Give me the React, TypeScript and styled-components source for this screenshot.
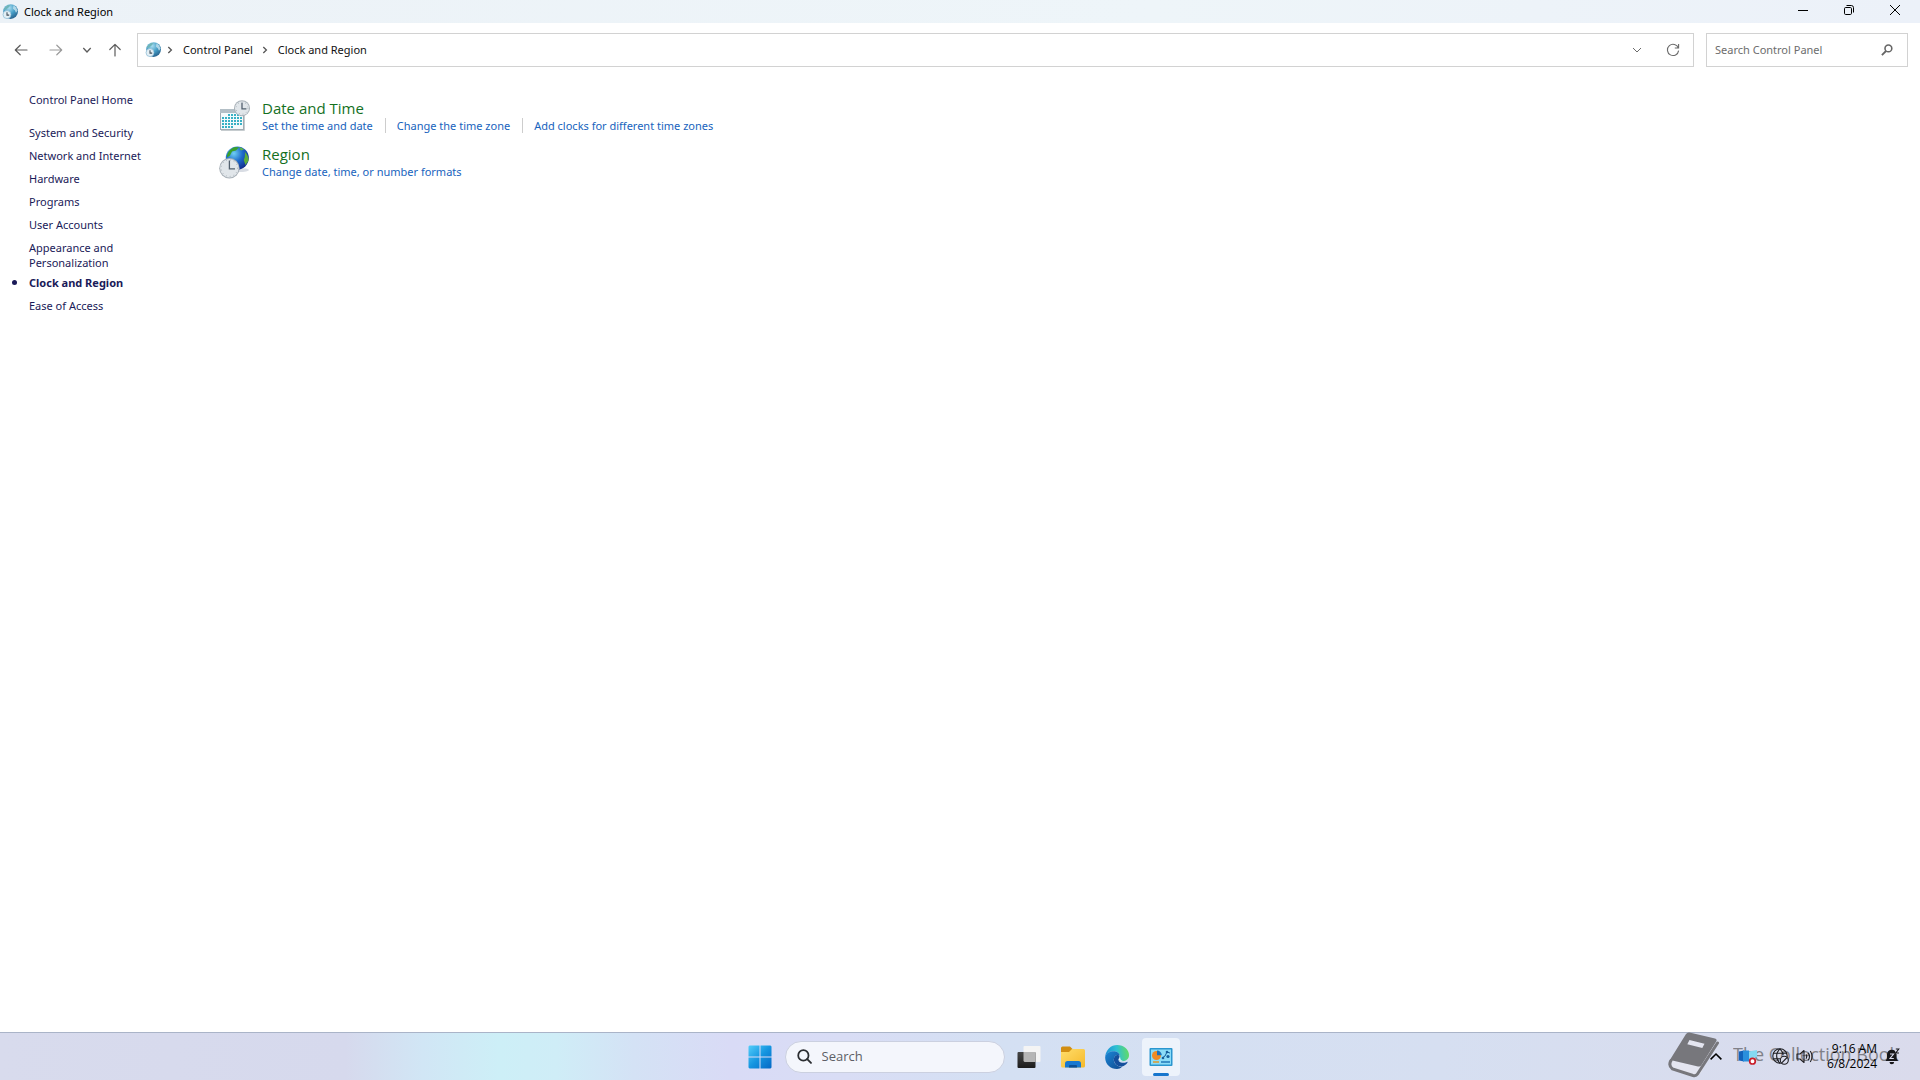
import React from "react";
import styled, { createGlobalStyle } from "styled-components";

const GlobalStyle = createGlobalStyle`
  * { box-sizing: border-box; }
  body {
    margin: 0;
    background: #fff;
    font-family: "Noto Sans", "Open Sans", sans-serif;
    font-size: 11px;
    line-height: 15px;
    color: #000;
  }
  button, input { font: inherit; color: inherit; }
  svg { display: block; flex: none; }
`;

const Screen = styled.div`
  min-height: 100vh;
  display: flex;
  flex-direction: column;
`;

const TitleBar = styled.header`
  height: 23px;
  display: flex;
  justify-content: space-between;
  background: linear-gradient(90deg, #ecf2f7, #eef5f9 60%, #ecf1f9);
`;

const TitleLabel = styled.h1`
  margin: 0;
  padding-left: 2px;
  display: flex;
  align-items: center;
  gap: 6px;
  font-size: 11px;
  font-weight: 400;
`;

const PlainButton = styled.button`
  border: 0;
  padding: 0;
  background: transparent;
  display: flex;
  align-items: center;
  justify-content: center;
`;

const CaptionButtons = styled.div`
  display: flex;
  padding-right: 2px;
`;

const CaptionButton = styled(PlainButton)`
  width: 46px;
  height: 20px;
`;

const Toolbar = styled.nav`
  display: flex;
  align-items: center;
  padding: 10px 12px 10px 5px;
`;

const NavButtons = styled.div`
  display: flex;
  align-items: center;
  margin-right: 6px;
`;

const NavButton = styled(PlainButton)<{ $width: number; $dim?: boolean }>`
  width: ${(p) => p.$width}px;
  height: 32px;
  color: ${(p) => (p.$dim ? "#9b9b9b" : "#5c5c5c")};
`;

const AddressBar = styled.div`
  flex: 1;
  height: 34px;
  display: flex;
  align-items: center;
  border: 1px solid #d2d2d2;
  padding: 0 2px 0 7px;
`;

const Crumbs = styled.ol`
  flex: 1;
  list-style: none;
  margin: 0;
  padding: 0 0 1px 6px;
  display: flex;
  align-items: center;
`;

const Crumb = styled.li`
  display: flex;
  align-items: center;
  gap: 10px;
  margin-right: 9px;
  a { color: #111; text-decoration: none; }
`;

const AddressButton = styled(PlainButton)`
  width: 36px;
  height: 30px;
  color: #6b6b6b;
`;

const SearchBox = styled.label`
  width: 202px;
  height: 34px;
  margin-left: 12px;
  display: flex;
  align-items: center;
  border: 1px solid #d2d2d2;
  padding: 0 14px 0 8px;
`;

const SearchInput = styled.input`
  flex: 1;
  min-width: 0;
  border: 0;
  padding: 0 0 1px;
  background: transparent;
  outline: none;
  &::placeholder { color: #6d6d6d; opacity: 1; }
`;

const Content = styled.div`
  flex: 1;
  display: flex;
`;

const Sidebar = styled.nav`
  width: 219px;
  padding: 15px 0 0 29px;
  color: #1a1a58;
  a { color: inherit; text-decoration: none; }
`;

const HomeLink = styled.a`
  display: block;
  margin-bottom: 18px;
`;

const CategoryList = styled.ul`
  width: 130px;
  list-style: none;
  margin: 0;
  padding: 0;
  display: grid;
  gap: 5px;
`;

const CategoryItem = styled.li<{ $current?: boolean }>`
  position: relative;
  min-height: 18px;
  font-weight: ${(p) => (p.$current ? 700 : 400)};
  &::before {
    content: "";
    display: ${(p) => (p.$current ? "block" : "none")};
    position: absolute;
    left: -17px;
    top: 5px;
    width: 5px;
    height: 5px;
    border-radius: 50%;
    background: #1a1a58;
  }
`;

const Applets = styled.main`
  flex: 1;
  padding-top: 20px;
`;

const Applet = styled.section`
  height: 46px;
  display: flex;
  gap: 11px;
`;

const AppletIcon = styled.div`
  padding-top: 3px;
`;

const AppletTitle = styled.h2`
  margin: 0;
  padding-top: 1px;
  font-family: "Open Sans", "Noto Sans", sans-serif;
  font-size: 15px;
  line-height: 20px;
  font-weight: 400;
  a { color: #14701e; text-decoration: none; }
`;

const TaskLinks = styled.ul`
  list-style: none;
  margin: 0;
  padding: 0;
  display: flex;
  li + li {
    margin-left: 12px;
    padding-left: 11px;
    border-left: 1px solid #cdcdcd;
  }
  a { color: #1763bd; text-decoration: none; }
`;

const Taskbar = styled.footer`
  position: relative;
  height: 48px;
  display: grid;
  grid-template-columns: 1fr auto 1fr;
  align-items: center;
  border-top: 1px solid #aab4c8;
  font-family: "Open Sans", "Noto Sans", sans-serif;
  font-size: 12px;
  background: linear-gradient(
    90deg,
    #d8dbed 0%,
    #d6d9ed 18%,
    #d1e6f5 22%,
    #cdeff7 26%,
    #cfedf7 29%,
    #d4e2f5 33%,
    #d9dbf6 38%,
    #d9ddf5 44%,
    #d4e0f3 52%,
    #d6dff1 75%,
    #dadbec 100%
  );
`;

const Pinned = styled.div`
  grid-column: 2;
  display: flex;
  align-items: center;
`;

const TaskButton = styled(PlainButton)`
  width: 44px;
  height: 46px;
`;

const ActiveTaskButton = styled(PlainButton)`
  position: relative;
  width: 38px;
  height: 38px;
  margin: 0 3px;
  border-radius: 4px;
  background: #edf3fb;
  &::after {
    content: "";
    position: absolute;
    bottom: 0;
    width: 16px;
    height: 3px;
    border-radius: 2px;
    background: #1675cd;
  }
`;

const TaskSearch = styled.label`
  width: 220px;
  height: 32px;
  margin: 0 2px 0 3px;
  padding: 0 12px 0 11px;
  display: flex;
  align-items: center;
  gap: 10px;
  border: 1px solid #cbd0e0;
  border-radius: 16px;
  background: #f4f6fc;
  font-size: 13px;
  ${SearchInput}::placeholder { color: #5d5f66; }
`;

const Tray = styled.div`
  position: relative;
  z-index: 1;
  grid-column: 3;
  justify-self: end;
  display: flex;
  align-items: center;
  padding-right: 17px;
`;

const TrayButton = styled(PlainButton)<{ $width: number }>`
  width: ${(p) => p.$width}px;
  height: 40px;
`;

const Clock = styled.button`
  border: 0;
  padding: 0 0 2px;
  width: 61px;
  margin-right: 4px;
  background: transparent;
  text-align: right;
  white-space: nowrap;
`;

const Watermark = styled.div`
  position: absolute;
  right: 21px;
  top: -1px;
  display: flex;
  align-items: flex-start;
  gap: 14px;
  color: #77777c;
  font-size: 18px;
  line-height: 44px;
  pointer-events: none;
  white-space: nowrap;
  span { opacity: 0.9; }
`;

const RegionSmallIcon = () => (
  <svg width="16" height="16" viewBox="0 0 16 16" aria-hidden="true">
    <defs>
      <radialGradient id="smallGlobe" cx="0.4" cy="0.25" r="0.8">
        <stop offset="0" stopColor="#a9def0" />
        <stop offset="0.5" stopColor="#459dc6" />
        <stop offset="1" stopColor="#255b86" />
      </radialGradient>
    </defs>
    <circle cx="8.6" cy="7.6" r="7.4" fill="url(#smallGlobe)" />
    <path d="M2.5 4 6 1l2.5.2L6.5 3.5 4 5.5 1.8 6z" fill="#6fb5b8" />
    <path d="M11.5 1.2l2.5 2 1.6 3.5-1.6 2-1.2-2.5-1.8-1.5z" fill="#c9e5ef" opacity="0.8" />
    <circle cx="5" cy="10.6" r="4" fill="#e3eff5" stroke="#86b8d2" strokeWidth="0.7" />
    <path d="M5 8.3v2.8h2.2" fill="none" stroke="#44505c" strokeWidth="1.1" />
  </svg>
);

const Arrow = ({ up, right }: { up?: boolean; right?: boolean }) => (
  <svg
    width="14"
    height="14"
    viewBox="0 0 14 14"
    fill="none"
    stroke="currentColor"
    strokeWidth="1.2"
    strokeLinecap="round"
    strokeLinejoin="round"
    aria-hidden="true"
  >
    {up ? (
      <path d="M7 13V1.5M1.8 6.5 7 1.3l5.2 5.2" />
    ) : right ? (
      <path d="M1 7h11.5M7.8 2.2 12.7 7l-4.9 4.8" />
    ) : (
      <path d="M13 7H1.5M6.2 2.2 1.3 7l4.9 4.8" />
    )}
  </svg>
);

const Chevron = ({ d, w = 1.1, size = 10 }: { d: string; w?: number; size?: number }) => (
  <svg width={size} height={size} viewBox="0 0 10 10" fill="none" stroke="currentColor" strokeWidth={w} aria-hidden="true">
    <path d={d} />
  </svg>
);

const CrumbChevron = () => (
  <svg width="6" height="8" viewBox="0 0 6 8" fill="none" stroke="#555" strokeWidth="1.3" aria-hidden="true">
    <path d="M1.3 1 4.4 4 1.3 7" />
  </svg>
);

const ClockFace = ({ cx, cy, r }: { cx: number; cy: number; r: number }) => (
  <g>
    <circle cx={cx} cy={cy} r={r} fill="#a9b1b8" />
    <circle cx={cx} cy={cy} r={r - 1} fill="#e1e6ea" />
    <circle cx={cx} cy={cy} r={r - 2} fill="none" stroke="#9ca6ae" strokeWidth="1" strokeDasharray="0.7 3.2" />
    <path d={`M${cx} ${cy - r + 2.6}V${cy + 0.6}H${cx + r * 0.55}`} fill="none" stroke="#53616f" strokeWidth="1.3" />
  </g>
);

const DateTimeIcon = () => (
  <svg width="32" height="32" viewBox="0 0 32 32" aria-hidden="true">
    <rect x="1.5" y="9.5" width="23" height="20" fill="#f4fafb" stroke="#a2acb3" />
    <path d="M1 9h24v4H1z" fill="#b3bfc6" />
    <path d="M2 30.5h23.5V13" fill="none" stroke="#c6cccf" />
    <g fill="#38b1c5">
      {[14, 17, 20, 23, 26].flatMap((y, row) =>
        [3, 6, 9, 12, 15, 18, 21].map((x, col) =>
          (row === 0 && col < 2) || (row === 4 && col > 3) ? null : (
            <rect key={`${x}-${y}`} x={x} y={y} width="2" height="2" />
          ),
        ),
      )}
    </g>
    <ClockFace cx={23} cy={8.2} r={8} />
  </svg>
);

const RegionIcon = () => (
  <svg width="32" height="34" viewBox="0 0 32 34" aria-hidden="true">
    <defs>
      <radialGradient id="regionGlobe" cx="0.35" cy="0.3" r="0.75">
        <stop offset="0" stopColor="#6fd0f4" />
        <stop offset="0.5" stopColor="#1e6bcb" />
        <stop offset="1" stopColor="#122d8b" />
      </radialGradient>
    </defs>
    <ellipse cx="20" cy="24" rx="10" ry="2" fill="#d9dde4" />
    <circle cx="18.3" cy="12" r="11.5" fill="url(#regionGlobe)" />
    <path d="M8 9q2-6 8-8l4 .3-3 3.2-4 1-2 4-3 2z" fill="#3aa02c" />
    <path d="M20 1q3 .5 5 2.5l-3 1z" fill="#64b93f" />
    <path d="M26 6q4 4 3.4 9l-3 4-1.6-5 1-3z" fill="#5daf3b" />
    <ClockFace cx={10.4} cy={22.2} r={10.2} />
  </svg>
);

const Magnifier = ({ size, w }: { size: number; w: number }) => (
  <svg width={size} height={size} viewBox="0 0 16 16" fill="none" stroke="#2b2d31" strokeWidth={w} strokeLinecap="round" aria-hidden="true">
    <circle cx="6.8" cy="6.8" r="5.5" />
    <path d="m10.9 10.9 4 4" />
  </svg>
);

const categories = [
  "System and Security",
  "Network and Internet",
  "Hardware",
  "Programs",
  "User Accounts",
  "Appearance and Personalization",
  "Clock and Region",
  "Ease of Access",
];

const applets = [
  {
    title: "Date and Time",
    icon: <DateTimeIcon />,
    tasks: ["Set the time and date", "Change the time zone", "Add clocks for different time zones"],
  },
  { title: "Region", icon: <RegionIcon />, tasks: ["Change date, time, or number formats"] },
];

export default function App() {
  return (
    <Screen>
      <GlobalStyle />
      <TitleBar>
        <TitleLabel>
          <RegionSmallIcon />
          Clock and Region
        </TitleLabel>
        <CaptionButtons>
          <CaptionButton aria-label="Minimize">
            <svg width="10" height="10" viewBox="0 0 10 10" stroke="#000"><path d="M0 5.5h10" /></svg>
          </CaptionButton>
          <CaptionButton aria-label="Restore">
            <svg width="10" height="10" viewBox="0 0 10 10" fill="none" stroke="#000">
              <rect x="0.5" y="2.5" width="7" height="7" rx="1.2" />
              <path d="M2.5.5h4.8a2.2 2.2 0 0 1 2.2 2.2v4.8" />
            </svg>
          </CaptionButton>
          <CaptionButton aria-label="Close">
            <svg width="10" height="10" viewBox="0 0 10 10" stroke="#000"><path d="m0 0 10 10M10 0 0 10" /></svg>
          </CaptionButton>
        </CaptionButtons>
      </TitleBar>

      <Toolbar aria-label="Navigation">
        <NavButtons>
          <NavButton $width={32} aria-label="Back"><Arrow /></NavButton>
          <NavButton $width={38} $dim aria-label="Forward"><Arrow right /></NavButton>
          <NavButton $width={24} aria-label="Recent locations"><Chevron d="M1.3 3 5 7l3.7-4" w={1.3} /></NavButton>
          <NavButton $width={32} aria-label="Up"><Arrow up /></NavButton>
        </NavButtons>
        <AddressBar>
          <RegionSmallIcon />
          <Crumbs>
            <Crumb><CrumbChevron /><a href="#control-panel">Control Panel</a></Crumb>
            <Crumb><CrumbChevron /><a href="#clock-and-region">Clock and Region</a></Crumb>
          </Crumbs>
          <AddressButton aria-label="Previous locations"><Chevron d="M1 3 5 7l4-4" w={1} /></AddressButton>
          <AddressButton aria-label="Refresh">
            <svg width="14" height="14" viewBox="0 0 14 14" fill="none" stroke="currentColor" strokeWidth="1.1">
              <path d="M12.3 5A5.6 5.6 0 1 0 12.6 7.6M12.6 1v4H8.8" />
            </svg>
          </AddressButton>
        </AddressBar>
        <SearchBox>
          <SearchInput type="text" placeholder="Search Control Panel" aria-label="Search Control Panel" />
          <svg width="12" height="12" viewBox="0 0 12 12" fill="none" stroke="#666" aria-hidden="true">
            <circle cx="7.4" cy="4.4" r="3.4" strokeWidth="1.6" />
            <path d="M5 7 .9 11.1" strokeWidth="1.8" />
          </svg>
        </SearchBox>
      </Toolbar>

      <Content>
        <Sidebar aria-label="Control Panel categories">
          <HomeLink href="#home">Control Panel Home</HomeLink>
          <CategoryList>
            {categories.map((name) => (
              <CategoryItem key={name} $current={name === "Clock and Region"}>
                <a href="#category">{name}</a>
              </CategoryItem>
            ))}
          </CategoryList>
        </Sidebar>
        <Applets>
          {applets.map(({ title, icon, tasks }) => (
            <Applet key={title}>
              <AppletIcon>{icon}</AppletIcon>
              <div>
                <AppletTitle><a href="#applet">{title}</a></AppletTitle>
                <TaskLinks>
                  {tasks.map((task) => (
                    <li key={task}><a href="#task">{task}</a></li>
                  ))}
                </TaskLinks>
              </div>
            </Applet>
          ))}
        </Applets>
      </Content>

      <Taskbar>
        <Pinned>
          <TaskButton aria-label="Start">
            <svg width="24" height="24" viewBox="0 0 24 24">
              <defs>
                <linearGradient id="start" x1="0" y1="0" x2="24" y2="24" gradientUnits="userSpaceOnUse">
                  <stop offset="0" stopColor="#55d0fb" />
                  <stop offset="0.5" stopColor="#1595e0" />
                  <stop offset="1" stopColor="#0466c4" />
                </linearGradient>
              </defs>
              <path d="M1.5.5H11.5V11.5H.5V1.5zM12.5.5h10l1 1v10h-11zM.5 12.5h11v11h-10l-1-1zM12.5 12.5h11v10l-1 1h-10z" fill="url(#start)" />
            </svg>
          </TaskButton>
          <TaskSearch>
            <Magnifier size={15} w={1.9} />
            <SearchInput type="text" placeholder="Search" aria-label="Search" />
          </TaskSearch>
          <TaskButton aria-label="Task view">
            <svg width="24" height="24" viewBox="0 0 24 24">
              <defs>
                <linearGradient id="front" x1="0" y1="0" x2="0" y2="1">
                  <stop offset="0" stopColor="#454545" /><stop offset="1" stopColor="#1c1c1c" />
                </linearGradient>
              </defs>
              <rect x="6.5" y="1" width="17" height="16" rx="1" fill="#f4f4f4" />
              <rect x="0.5" y="7" width="18" height="16" rx="1" fill="url(#front)" />
              <path d="M6.5 7h12v10h-11l-1-1z" fill="#b5b5b5" />
            </svg>
          </TaskButton>
          <TaskButton aria-label="File Explorer">
            <svg width="24" height="24" viewBox="0 0 24 24">
              <defs>
                <linearGradient id="folder" x1="0" y1="0" x2="1" y2="1">
                  <stop offset="0" stopColor="#ffdd6a" /><stop offset="1" stopColor="#f5b92b" />
                </linearGradient>
              </defs>
              <path d="M0 3q0-1.5 1.5-1.5H9l2.5 2.5v4H0z" fill="#d28e12" />
              <path d="M0 7h8l3-3h11.5Q24 4 24 5.5V21q0 1.500-1.500 1.500h-21Q0 22.500 0 21z" fill="url(#folder)" />
              <path d="M4 22.500v-4Q4 16 6.500 16h11Q20 16 20 18.500v4z" fill="#1778d0" />
              <path d="M8 22.500v-1.500q0-1 1-1h6q1 0 1 1v1.500z" fill="#0b4f95" />
            </svg>
          </TaskButton>
          <TaskButton aria-label="Microsoft Edge">
            <svg width="24" height="24" viewBox="0 0 24 24">
              <defs>
                <linearGradient id="edgeTop" x1="0" y1="0.5" x2="1" y2="0.4">
                  <stop offset="0" stopColor="#1c8fd6" /><stop offset="0.5" stopColor="#2fc0d3" /><stop offset="1" stopColor="#63dc62" />
                </linearGradient>
                <linearGradient id="edgeLow" x1="0" y1="0" x2="1" y2="1">
                  <stop offset="0" stopColor="#1a86d6" /><stop offset="1" stopColor="#114a8f" />
                </linearGradient>
              </defs>
              <path d="M.3 11.5C.8 4.800 6 0 12.200 0 19 0 24 4.700 24 10c0 4-3 6.200-6.200 6.200-3 0-4.200-1.200-4.200-2 0-.7 1.200-1.300 1.200-3.300C14.800 8.200 12 6.200 8.500 6.200 4.500 6.200 1.500 8.300.3 11.500z" fill="url(#edgeTop)" />
              <path d="M.2 12C.6 8.400 4.300 6.200 8.400 6.200c3.700 0 6.200 2 6.400 4.500C13.500 9.300 9 9.800 8.800 14.300c-.2 4.500 4 8.200 8.500 7.200C15.500 23.300 13.800 24 12 24 5.300 24-.2 18.700.2 12z" fill="url(#edgeLow)" />
              <path d="M10.300 10.900c-1 .8-1.500 2-1.500 3.400 0 4.300 3.800 7.700 8.200 7.200 2.200-.4 4.300-2 5.500-4 .3-.6-.1-.9-.6-.6-4.400 2.100-9.200.3-8.300-3 .3-.6 1-1 1.100-2.500-.8-1.500-3-1.700-4.400-.5z" fill="#144f9c" />
              <path d="M13.600 14.200c.3-.6 1.200-1.300 1.200-3.300.8 2-.2 4.300 3.800 5.200-2.800.3-5-.7-5-1.900z" fill="#e8f3fb" />
            </svg>
          </TaskButton>
          <ActiveTaskButton aria-label="Control Panel">
            <svg width="24" height="20" viewBox="0 0 24 20">
              <rect x="0.5" y="1" width="23" height="18" rx="1" fill="#2a96cf" />
              <rect x="2" y="2.5" width="20" height="15" fill="#8bdcf8" />
              <circle cx="7.5" cy="8.5" r="4.5" fill="#f08b24" />
              <path d="M8 3.5a4.800 4.800 0 0 1 4.800 4.800H8z" fill="#1b71bb" />
              <path d="m13 11 3-2 2-4 3 1" stroke="#175f9d" fill="none" />
              <g fill="#175f9d"><circle cx="14" cy="11" r="1.3" /><circle cx="18" cy="5" r="1.3" /><circle cx="19" cy="9.5" r="1.6" /></g>
              <path d="M4 15h6" stroke="#dd992b" strokeWidth="1.5" />
              <path d="M12 15h9" stroke="#2178b8" strokeWidth="1.5" />
            </svg>
          </ActiveTaskButton>
        </Pinned>

        <Tray>
          <TrayButton $width={24} aria-label="Show hidden icons"><Chevron d="M.5 7 5 2.5 9.500 7" w={1.3} size={12} /></TrayButton>
          <TrayButton $width={40} aria-label="Device status">
            <svg width="18" height="18" viewBox="0 0 18 18">
              <path d="M0 3.5 5 2.5v11l-5-1z" fill="#1262ba" />
              <path d="M4 2.5h6v11H4z" fill="#2a8fdc" />
              <path d="M10 3.5 18 2v7l-8 2z" fill="#84d9f2" />
              <circle cx="13.5" cy="13.2" r="2.8" fill="#fff" stroke="#c81e2b" strokeWidth="1.7" />
            </svg>
          </TrayButton>
          <TrayButton $width={24} aria-label="No internet access">
            <svg width="17" height="17" viewBox="0 0 17 17" fill="none" stroke="#1e1e22" strokeWidth="1.1">
              <circle cx="8" cy="8" r="7.2" />
              <path d="M1.300 5.300h13.400M1.300 10.700H8M8 .8C3.500 5 3.500 11 8 15.200M8 .8c2 2 3 4.300 3.200 6.500" />
              <circle cx="12.3" cy="12.3" r="4" fill="#dadced" />
              <path d="m9.500 15.100 5.600-5.600" />
            </svg>
          </TrayButton>
          <TrayButton $width={24} aria-label="Volume">
            <svg width="17" height="15" viewBox="0 0 17 15" fill="none" stroke="#1e1e22" strokeWidth="1.1" strokeLinejoin="round">
              <path d="M1 5h3l4-3.500v12L4 10H1zM10 5.300q1.400 2.200 0 4.400M12.200 3.700q2.600 3.800 0 7.600M14.300 2q3.600 5.500 0 11" />
            </svg>
          </TrayButton>
          <Clock>9:16 AM<br />6/8/2024</Clock>
          <TrayButton $width={22} aria-label="Notifications">
            <svg width="15" height="17" viewBox="0 0 15 17">
              <path d="M.5 13 2 10.500V6.500a4.800 4.800 0 0 1 9.600 0v4L13 13z" fill="#17171a" />
              <path d="M4.500 14h4.600a2.300 2.300 0 0 1-4.600 0z" fill="#17171a" />
              <path d="M5 6h3.600L5 10.500h3.800" fill="none" stroke="#dadced" strokeWidth="1.1" />
              <path d="M9.500 0H15v6H11z" fill="#dadced" />
              <path d="M10.800 1h3l-3 4h3.200" fill="none" stroke="#17171a" strokeWidth="1.1" />
            </svg>
          </TrayButton>
        </Tray>

        <Watermark>
          <svg width="52" height="48" viewBox="0 0 52 48" aria-hidden="true">
            <path d="M3 30 20 5 48 10 34 41 28 45 6 37z" fill="#e4e5f0" />
            <path
              fillRule="evenodd"
              fill="currentColor"
              d="M22.500.5 48 6.500q2.500.8 1.200 3L34.500 33q-1.200 2-3.500 1.400L5.500 28.500Q2 28 1 31L19 2q1.500-2 3.500-1.500zM22.500 8l-2.200 4.200 15 3.800 2.200-4.200z"
            />
            <path
              d="M4 28.500q-3 5 1.500 8.500L26 43.500q3 .8 4.500-1.500L50.500 11"
              fill="none"
              stroke="currentColor"
              strokeWidth="3"
              strokeLinecap="round"
            />
          </svg>
          <span>The Collection Book</span>
        </Watermark>
      </Taskbar>
    </Screen>
  );
}
